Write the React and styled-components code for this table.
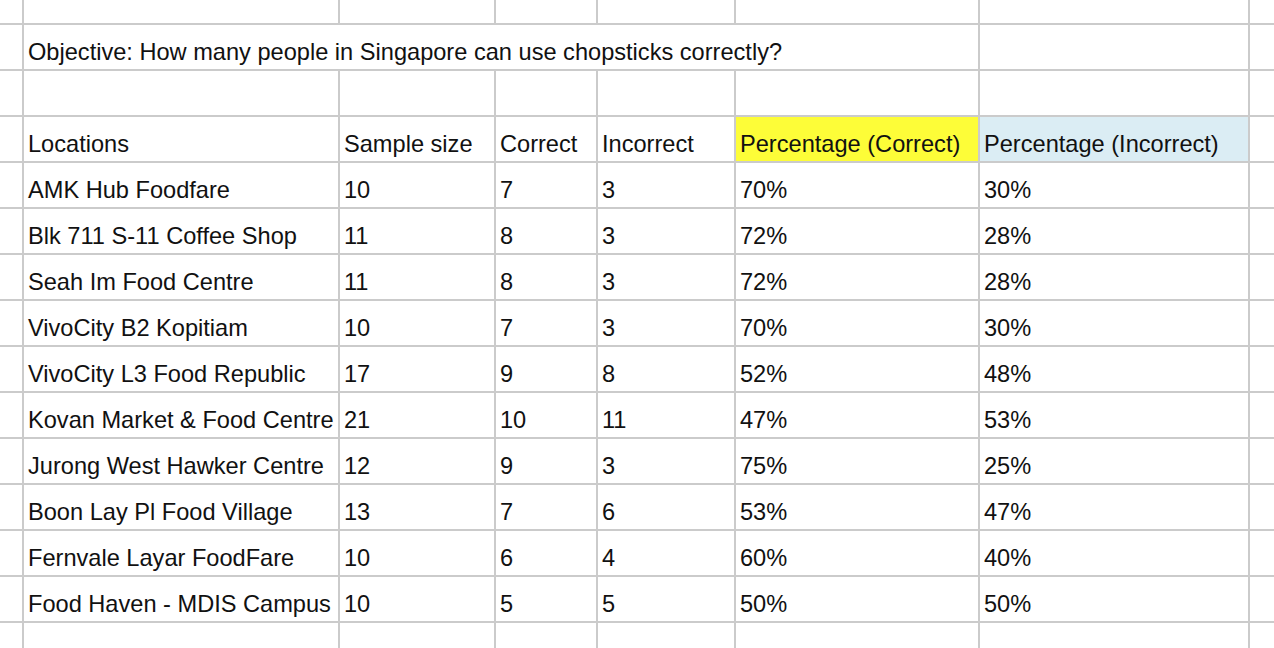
import styled, { createGlobalStyle } from "styled-components";

const GlobalStyle = createGlobalStyle`
  html, body {
    margin: 0;
    padding: 0;
    background: #ffffff;
    overflow: hidden;
  }
`;

const rows = [
  ["AMK Hub Foodfare", "10", "7", "3", "70%", "30%"],
  ["Blk 711 S-11 Coffee Shop", "11", "8", "3", "72%", "28%"],
  ["Seah Im Food Centre", "11", "8", "3", "72%", "28%"],
  ["VivoCity B2 Kopitiam", "10", "7", "3", "70%", "30%"],
  ["VivoCity L3 Food Republic", "17", "9", "8", "52%", "48%"],
  ["Kovan Market & Food Centre", "21", "10", "11", "47%", "53%"],
  ["Jurong West Hawker Centre", "12", "9", "3", "75%", "25%"],
  ["Boon Lay Pl Food Village", "13", "7", "6", "53%", "47%"],
  ["Fernvale Layar FoodFare", "10", "6", "4", "60%", "40%"],
  ["Food Haven - MDIS Campus", "10", "5", "5", "50%", "50%"],
];

const headers = [
  { label: "Locations" },
  { label: "Sample size" },
  { label: "Correct" },
  { label: "Incorrect" },
  { label: "Percentage (Correct)", fill: "#fdfd38" },
  { label: "Percentage (Incorrect)", fill: "#dbedf4" },
];

const Sheet = styled.div`
  display: grid;
  grid-template-columns: 22px 314px 154px 100px 136px 242px 268px 1fr;
  grid-template-rows: 23px repeat(14, 44px);
  gap: 2px;
  background: #cbcbcb;
  width: 1274px;
  height: 648px;
  overflow: hidden;
  font-family: "Liberation Sans", Arial, sans-serif;
  font-size: 23.6px;
  color: #111;
`;

const Cell = styled.div`
  background: ${(p) => p.fill || "#ffffff"};
  grid-column: ${(p) => (p.span ? `span ${p.span}` : "auto")};
  display: flex;
  align-items: flex-end;
  padding: 0 0 3px 4px;
  white-space: nowrap;
  overflow: visible;
  line-height: 28px;
  min-width: 0;
`;

const blankRow = (key) =>
  Array.from({ length: 8 }, (_, i) => <Cell key={`${key}-${i}`} />);

export default function App() {
  return (
    <>
      <GlobalStyle />
      <Sheet>
        {blankRow("top")}

        <Cell />
        <Cell span={5}>
          Objective: How many people in Singapore can use chopsticks correctly?
        </Cell>
        <Cell />
        <Cell />

        {blankRow("gap")}

        <Cell />
        {headers.map((h) => (
          <Cell key={h.label} fill={h.fill}>
            {h.label}
          </Cell>
        ))}
        <Cell />

        {rows.map((r) => [
          <Cell key={`${r[0]}-a`} />,
          ...r.map((v, i) => <Cell key={`${r[0]}-${i}`}>{v}</Cell>),
          <Cell key={`${r[0]}-z`} />,
        ])}

        {blankRow("bottom")}
      </Sheet>
    </>
  );
}
